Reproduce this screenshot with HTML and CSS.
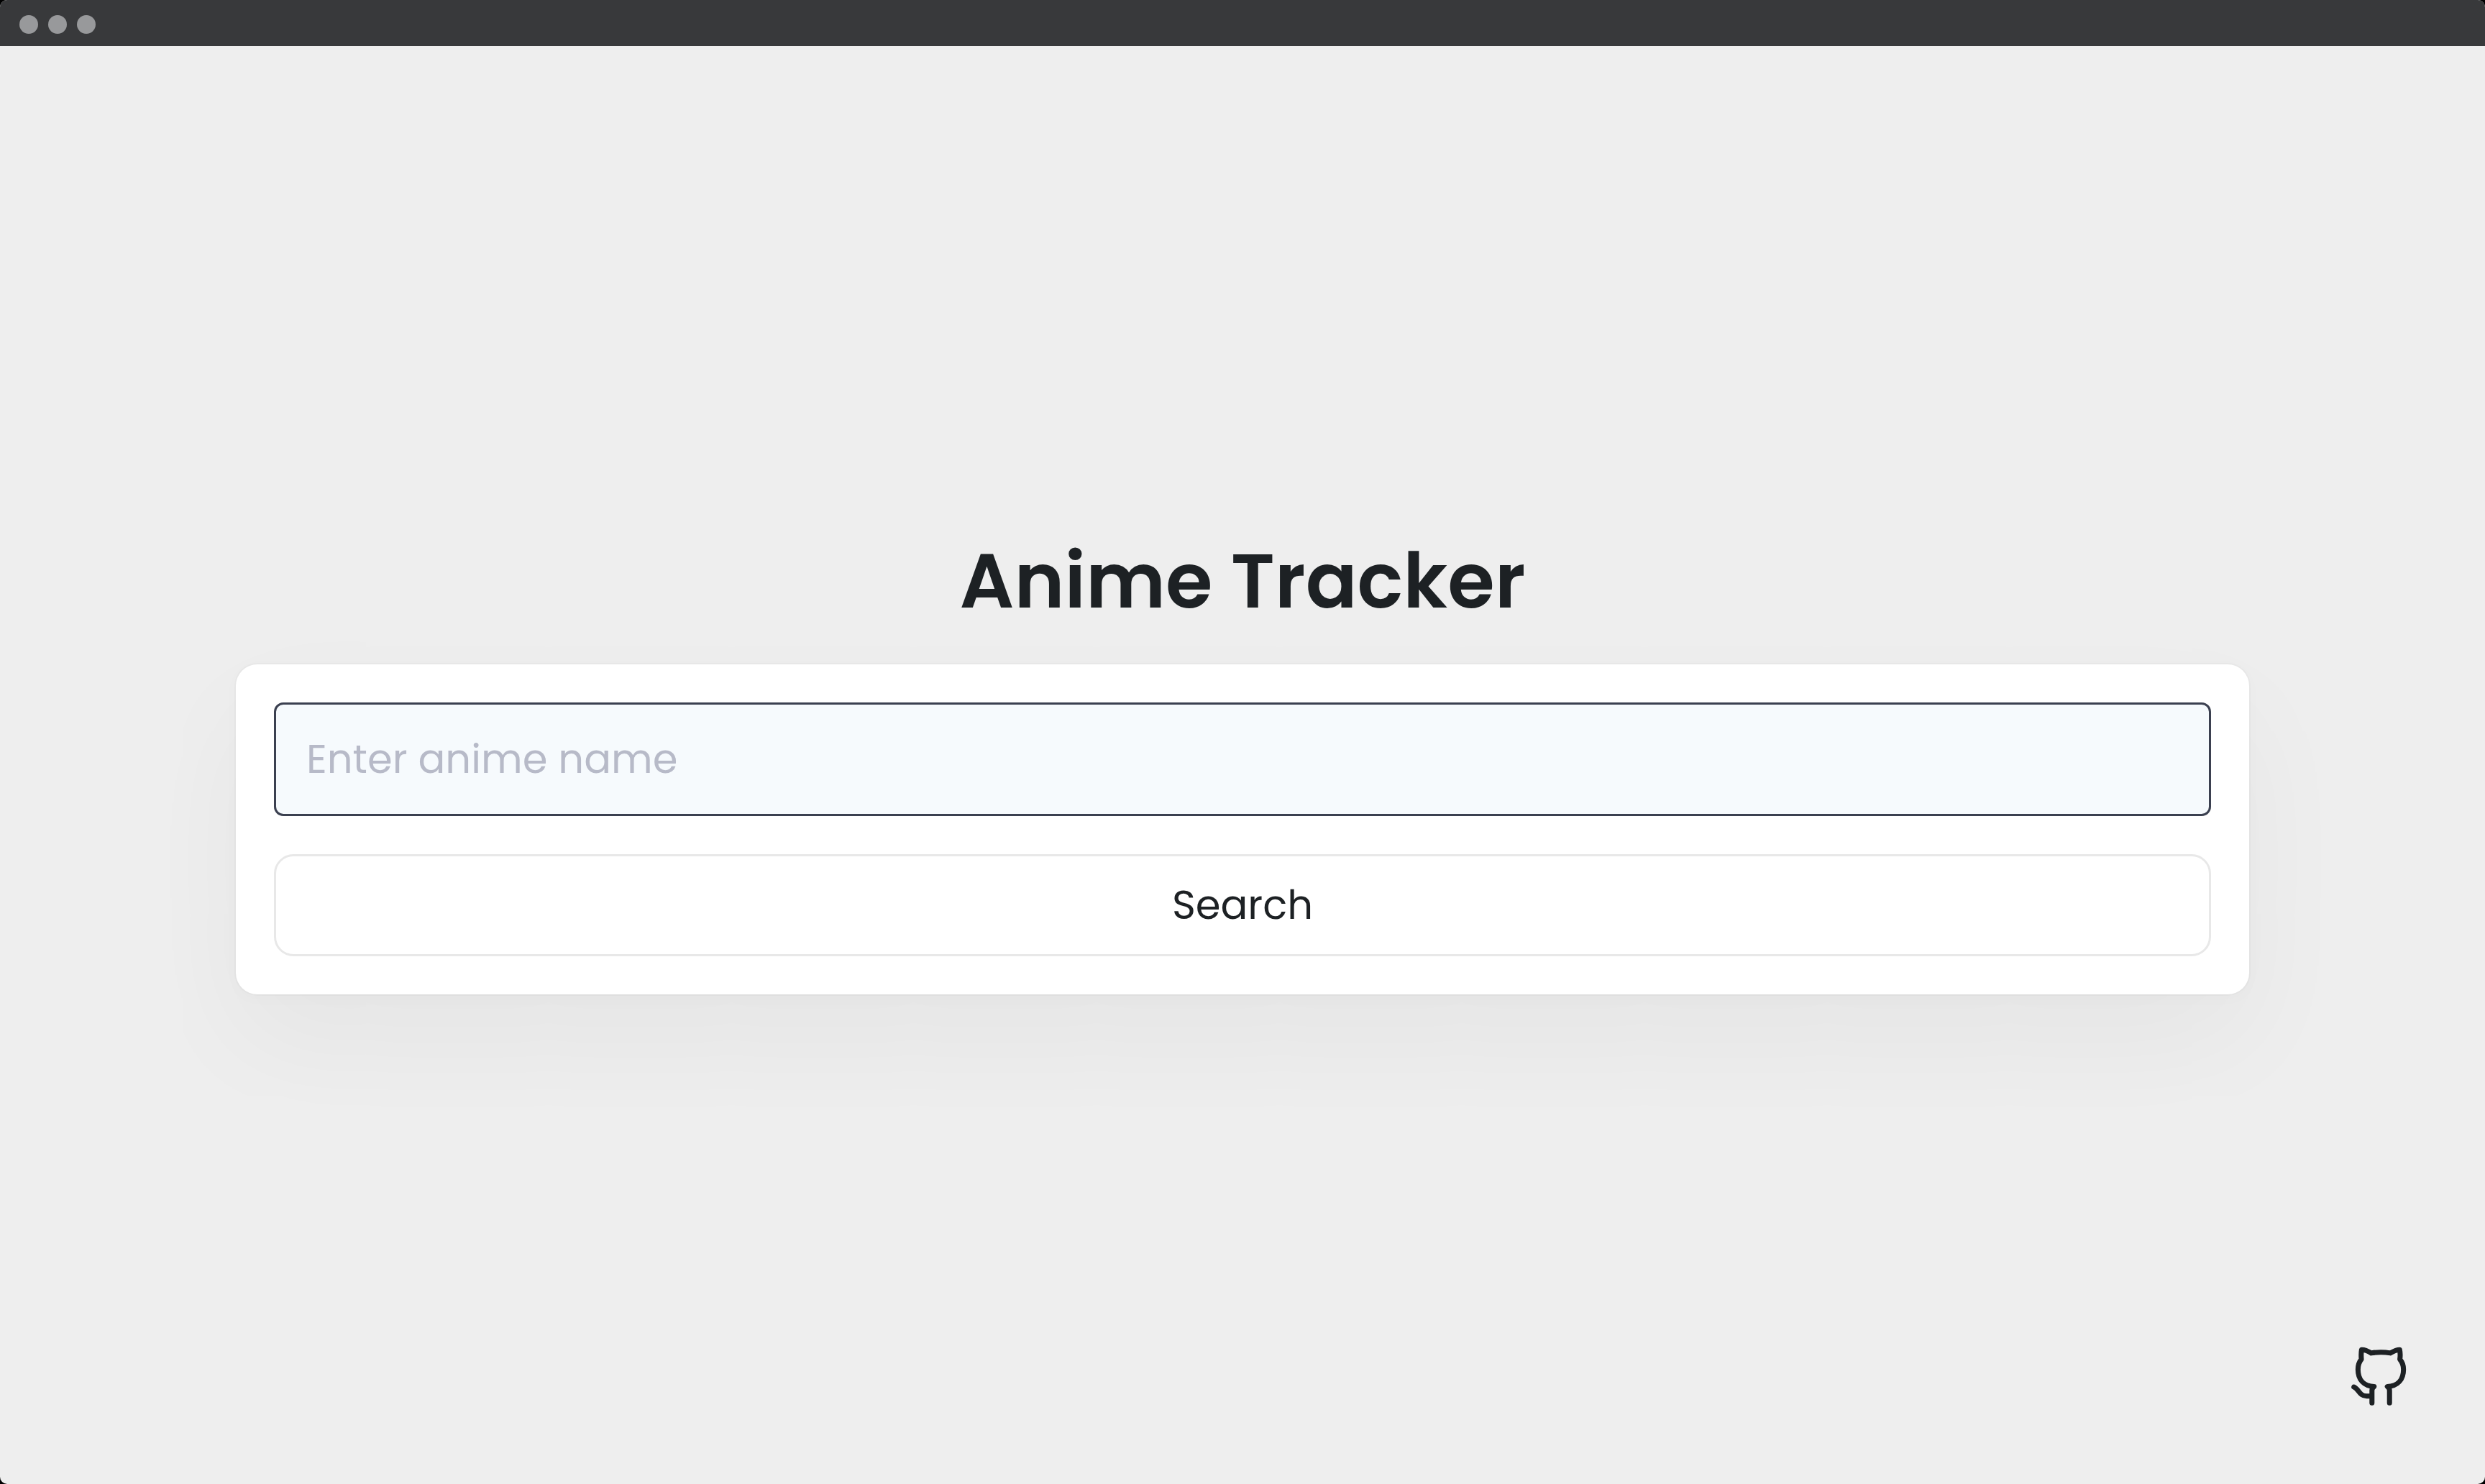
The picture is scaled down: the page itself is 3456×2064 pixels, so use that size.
FILE: index.html
```html
<!DOCTYPE html>
<html lang="en">
<head>
  <meta charset="utf-8">
  <meta name="viewport" content="width=device-width, initial-scale=1">
  <title>Anime Tracker</title>
  <link rel="stylesheet" href="styles.css">
</head>
<body>
  <div class="window">
    <header class="titlebar">
      <span class="titlebar-dot"></span>
      <span class="titlebar-dot"></span>
      <span class="titlebar-dot"></span>
    </header>
    <main class="page">
      <h1 class="title">Anime Tracker</h1>
      <form class="card">
        <input class="field" type="text" placeholder="Enter anime name" aria-label="Anime name">
        <button class="search" type="submit">Search</button>
      </form>
    </main>
    <a class="github" href="#" aria-label="GitHub">
      <svg class="github-icon" viewBox="90 100 230 250" fill="none" stroke="currentColor" stroke-width="21" stroke-linecap="round" stroke-linejoin="round">
        <path d="M249 336V284Q249 275 240 268C284 266 307 238 307 197Q307 172 292 155Q295 133 291 115Q276 115 253 129Q213 123 173 129Q148 114 133 115Q130 132 132 155Q118 172 118 197C118 238 141 266 185 268Q176 275 176 284V336"/>
        <path d="M101 270C121 278 123 308 154 308H172"/>
      </svg>
    </a>
  </div>
</body>
</html>
```
FILE: styles.css
```css
* {
  box-sizing: border-box;
}

body {
  margin: 0;
  background: #000;
  color: #1d2124;
  font-family: Poppins, Inter, sans-serif;
  font-size: 56px;
}

.window {
  position: relative;
  display: flex;
  flex-direction: column;
  min-height: 100vh;
  overflow: hidden;
  border-radius: 10px;
  background: #eee;
}

.titlebar {
  display: flex;
  align-items: center;
  gap: 14px;
  height: 64px;
  padding: 4px 27px 0;
  background: #38393b;
}

.titlebar-dot {
  width: 26px;
  height: 26px;
  border-radius: 50%;
  background: #98999b;
}

.page {
  flex: 1;
  display: flex;
  flex-direction: column;
  align-items: center;
  justify-content: center;
  gap: 53px;
  padding: 53px;
}

.title {
  margin: 0;
  font-size: 106px;
  font-weight: 600;
  line-height: 126px;
}

.card {
  display: flex;
  flex-direction: column;
  gap: 53px;
  width: 100%;
  max-width: 2800px;
  padding: 53px;
  border-radius: 30px;
  background: #fff;
  box-shadow: 0 67px 160px rgba(0, 0, 0, 0.04), 0 5px 24px rgba(0, 0, 0, 0.02), 0 0 0 2px rgba(0, 0, 0, 0.02);
}

.field,
.search {
  width: 100%;
  font: inherit;
  line-height: 84px;
  color: inherit;
}

.field {
  padding: 34px 42px;
  border: 3px solid #3b4050;
  border-radius: 13px;
  background: #f6fafd;
}

.field::placeholder {
  color: #b7bac8;
  opacity: 1;
}

.search {
  padding: 26px 42px;
  border: 3px solid #e8e8e8;
  border-radius: 27px;
  background: #fff;
  cursor: pointer;
}

.github {
  position: absolute;
  right: 109px;
  bottom: 108px;
  display: flex;
  color: #1d2124;
}

.github-icon {
  width: 77px;
  height: 84px;
}
```
